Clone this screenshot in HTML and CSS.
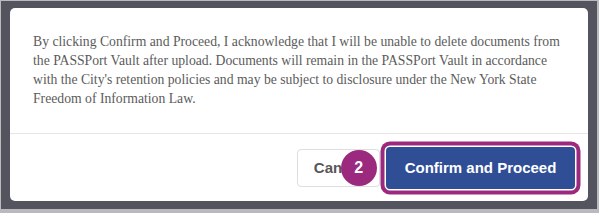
FILE: index.html
```html
<!DOCTYPE html>
<html>
<head>
<meta charset="utf-8">
<link rel="stylesheet" href="styles.css">
</head>
<body>
<div class="backdrop">
  <div class="dialog">
    <div class="dialog-body">
      <p class="notice">By clicking Confirm and Proceed, I acknowledge that I will be unable to delete documents from the PASSPort Vault after upload. Documents will remain in the PASSPort Vault in accordance with the City's retention policies and may be subject to disclosure under the New York State Freedom of Information Law.</p>
    </div>
    <div class="dialog-footer">
      <div class="cancel-wrap">
        <button class="btn btn-cancel">Cancel</button>
        <span class="badge">2</span>
      </div>
      <button class="btn btn-confirm">Confirm and Proceed</button>
    </div>
  </div>
</div>
</body>
</html>
```

FILE: styles.css
```css
html, body {
  margin: 0;
  padding: 0;
}
body {
  width: 599px;
  height: 213px;
  box-sizing: border-box;
  padding: 1px 2px 4px 1px;
  background: #b9b9be;
}
.backdrop {
  height: 100%;
  box-sizing: border-box;
  padding: 7px 9px 8px 9px;
  background: #54545e;
}
.dialog {
  height: 100%;
  background: #ffffff;
  border-radius: 5px;
  display: flex;
  flex-direction: column;
}
.dialog-body {
  padding: 24px 20px 0 23px;
  height: 126px;
  box-sizing: border-box;
  border-bottom: 1px solid #e6e6ea;
}
.notice {
  margin: 0;
  font-family: "Liberation Serif", "Times New Roman", serif;
  font-size: 13.7px;
  line-height: 19px;
  color: #5b5b5b;
}
.dialog-footer {
  flex: 1;
  display: flex;
  justify-content: flex-end;
  align-items: center;
  gap: 6px;
  padding: 0 13px 0 0;
}
.cancel-wrap {
  position: relative;
}
.btn {
  font-family: "Liberation Sans", Arial, sans-serif;
  font-weight: bold;
  font-size: 15px;
  border-radius: 4px;
  cursor: pointer;
}
.btn-cancel {
  height: 38px;
  padding: 0 16px;
  background: #ffffff;
  color: #575757;
  border: 1px solid #dedede;
}
.badge {
  position: absolute;
  left: 44px;
  top: 1px;
  width: 36px;
  height: 36px;
  border-radius: 50%;
  background: #9b2a7f;
  color: #ffffff;
  font-family: "Liberation Sans", Arial, sans-serif;
  font-weight: bold;
  font-size: 16px;
  display: flex;
  align-items: center;
  justify-content: center;
}
.btn-confirm {
  height: 42px;
  width: 189px;
  padding: 0;
  background: #2f4e96;
  color: #ffffff;
  border: none;
  box-shadow: 0 0 0 1.5px #ffffff, 0 0 0 5.5px #9b2a7f;
  border-radius: 4px;
}
```
